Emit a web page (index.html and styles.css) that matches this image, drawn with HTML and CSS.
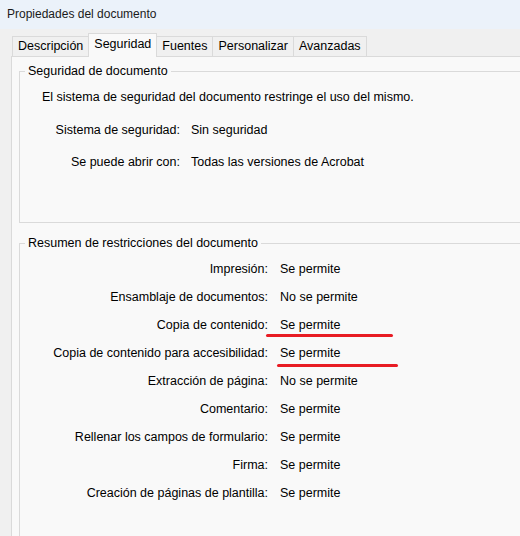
FILE: index.html
```html
<!DOCTYPE html>
<html lang="es">
<head>
    <meta charset="UTF-8">
    <title>Propiedades del documento</title>
    <link rel="stylesheet" href="styles.css">
</head>
<body>
    <div class="titlebar">Propiedades del documento</div>

    <div class="dialog">
        <div class="tabs">
            <div class="tab">Descripción</div>
            <div class="tab active">Seguridad</div>
            <div class="tab">Fuentes</div>
            <div class="tab">Personalizar</div>
            <div class="tab">Avanzadas</div>
        </div>

        <div class="panel">
            <fieldset class="group security">
                <legend>Seguridad de documento</legend>
                <p class="intro">El sistema de seguridad del documento restringe el uso del mismo.</p>
                <div class="rows">
                    <span class="label">Sistema de seguridad:</span>
                    <span class="value">Sin seguridad</span>
                    <span class="label">Se puede abrir con:</span>
                    <span class="value">Todas las versiones de Acrobat</span>
                </div>
            </fieldset>

            <fieldset class="group restrictions">
                <legend>Resumen de restricciones del documento</legend>
                <div class="rows">
                    <span class="label">Impresión:</span>
                    <span class="value">Se permite</span>
                    <span class="label">Ensamblaje de documentos:</span>
                    <span class="value">No se permite</span>
                    <span class="label">Copia de contenido:</span>
                    <span class="value marked">Se permite<i class="mark mark-one"></i></span>
                    <span class="label">Copia de contenido para accesibilidad:</span>
                    <span class="value marked">Se permite<i class="mark mark-two"></i></span>
                    <span class="label">Extracción de página:</span>
                    <span class="value">No se permite</span>
                    <span class="label">Comentario:</span>
                    <span class="value">Se permite</span>
                    <span class="label">Rellenar los campos de formulario:</span>
                    <span class="value">Se permite</span>
                    <span class="label">Firma:</span>
                    <span class="value">Se permite</span>
                    <span class="label">Creación de páginas de plantilla:</span>
                    <span class="value">Se permite</span>
                </div>
            </fieldset>
        </div>
    </div>
</body>
</html>
```

FILE: styles.css
```css
* {
    box-sizing: border-box;
    margin: 0;
    padding: 0;
}

body {
    background-color: #f0f0f0;
    color: #000;
    font-family: "Liberation Sans", Arial, sans-serif;
    font-size: 12.5px;
    overflow: hidden;
    width: 520px;
    height: 536px;
}

.titlebar {
    height: 29px;
    padding: 7px 0 0 7px;
    background-color: #ebf2fa;
    font-size: 12px;
    color: #1a1a1a;
}

.dialog {
    padding: 4px 0 0 11px;
    width: 600px;
}

/* tab strip */
.tabs {
    display: flex;
    align-items: flex-end;
    padding-left: 1px;
    height: 23px;
    position: relative;
    z-index: 1;
}

.tab {
    height: 20px;
    line-height: 19px;
    padding: 0 5px;
    border: 1px solid #dadada;
    border-bottom: none;
    border-left: none;
    background-color: #f0f0f0;
}

.tab:first-child {
    border-left: 1px solid #dadada;
}

.tab.active {
    height: 24px;
    line-height: 20px;
    margin-bottom: -1px;
    border-left: 1px solid #dadada;
    background-color: #f9f9f9;
    margin-left: -1px;
}

.tab.active + .tab {
    border-left: none;
}

.panel {
    background-color: #f9f9f9;
    border: 1px solid #dadada;
    padding: 7px 0 0 7px;
    height: 600px;
}

/* group boxes */
.group {
    border: 1px solid #dadada;
    padding: 0;
    line-height: 15px;
}

.group legend {
    margin-left: 5px;
    padding: 0 3px;
    line-height: 15px;
}

.intro {
    margin: 10px 0 9px 22px;
    line-height: 16px;
}

.rows {
    display: grid;
    grid-template-columns: 160px auto;
    column-gap: 11px;
    line-height: 32px;
}

.label {
    text-align: right;
}

.security {
    padding-bottom: 44px;
}

.restrictions {
    margin-top: 13px;
    padding-top: 4px;
    height: 400px;
}

.restrictions .rows {
    grid-template-columns: 248px auto;
    column-gap: 12px;
    line-height: 28px;
}

/* red marker strokes under the copy permissions */
.marked {
    position: relative;
}

.mark {
    position: absolute;
    height: 3px;
    border-radius: 2px;
    background-color: #e81c24;
}

.mark-one {
    left: -14px;
    width: 127px;
    top: 23px;
}

.mark-two {
    left: -3px;
    width: 121px;
    top: 25px;
}
```
